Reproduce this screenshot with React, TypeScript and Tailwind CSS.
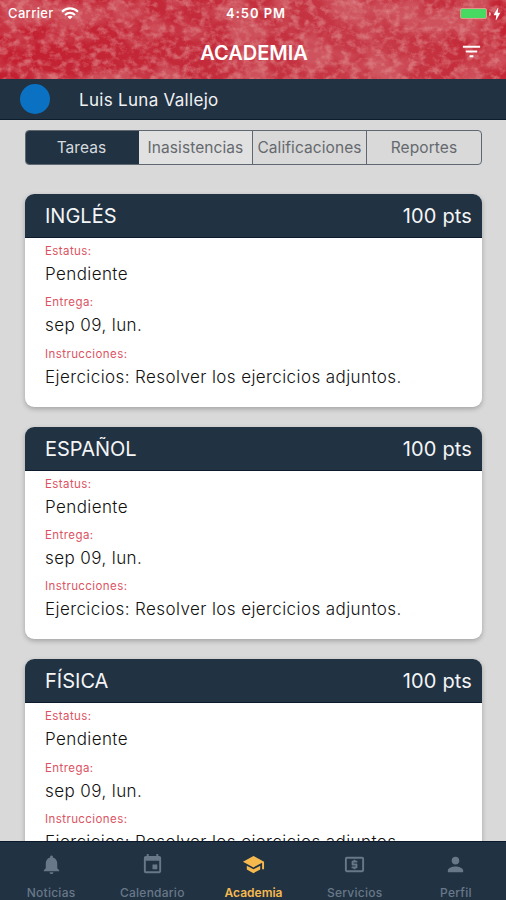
import React from "react";
import { MdNotifications, MdEvent, MdSchool, MdLocalAtm, MdPerson, MdFilterList, MdBolt } from "react-icons/md";

const tasks = ["INGLÉS", "ESPAÑOL", "FÍSICA"];

function Texture() {
  return (
    <svg className="absolute inset-0 h-full w-full" aria-hidden="true">
      <defs>
        <filter id="speckle" x="0" y="0" width="100%" height="100%" colorInterpolationFilters="sRGB">
          <feTurbulence type="fractalNoise" baseFrequency="0.12 0.15" numOctaves="5" seed="12" />
          <feColorMatrix values="0 0 0 0 0.88  0 0 0 0 0.56  0 0 0 0 0.57  2.8 0 0 0 -1.2" />
        </filter>
        <filter id="patches" x="0" y="0" width="100%" height="100%" colorInterpolationFilters="sRGB">
          <feTurbulence type="fractalNoise" baseFrequency="0.022 0.028" numOctaves="4" seed="5" />
          <feColorMatrix values="0 0 0 0 0.84  0 0 0 0 0.43  0 0 0 0 0.46  4 0 0 0 -1.75" />
        </filter>
        <linearGradient id="redBase">
          <stop offset="0" stopColor="#c31f30" />
          <stop offset="0.5" stopColor="#c42e3d" />
          <stop offset="0.75" stopColor="#c73b48" />
          <stop offset="1" stopColor="#c32433" />
        </linearGradient>
      </defs>
      <rect width="100%" height="100%" fill="url(#redBase)" />
      <rect width="100%" height="100%" filter="url(#patches)" opacity="0.55" />
      <rect width="100%" height="100%" filter="url(#speckle)" opacity="0.6" />
    </svg>
  );
}

function WifiIcon() {
  return (
    <svg viewBox="0 0 18 13" className="h-[13px] w-[18px]" fill="none" stroke="white" strokeWidth="2.1">
      <path d="M1 4.7C5.5.2 12.500.2 17 4.700" />
      <path d="M4 7.900C6.800 5.200 11.200 5.200 14 7.900" />
      <path d="M9 12.300 6.300 9.700Q9 7.800 11.700 9.700Z" fill="white" stroke="none" />
    </svg>
  );
}

function Field({ label, value }: { label: string; value: string }) {
  return (
    <div className="mb-[8.400px] whitespace-nowrap">
      <div className="mb-[3px] h-4 text-[11.500px] leading-4 tracking-[0.420px] text-[#dc5362]">{label}</div>
      <div className="h-6 text-[17px] font-light leading-6 tracking-[0.410px] text-[#111]">{value}</div>
    </div>
  );
}

function Card({ title }: { title: string }) {
  return (
    <article className="mb-5 h-[212.700px] shrink-0 overflow-hidden rounded-[9px] bg-white shadow-[0_2px_5px_rgba(0,0,0,0.25)]">
      <header className="flex h-11 items-center justify-between border-b border-[#0c1c2e] bg-[#213243] pl-5 pr-[10px] pt-px text-[20px] text-[#f4f5f6]">
        <h2>{title}</h2>
        <span className="tracking-[0.150px]">100 pts</span>
      </header>
      <div className="pl-5 pt-[5px]">
        <Field label="Estatus:" value="Pendiente" />
        <Field label="Entrega:" value="sep 09, lun." />
        <Field label="Instrucciones:" value="Ejercicios: Resolver los ejercicios adjuntos." />
      </div>
    </article>
  );
}

const nav = [
  { label: "Noticias", Icon: MdNotifications },
  { label: "Calendario", Icon: MdEvent },
  { label: "Academia", Icon: MdSchool },
  { label: "Servicios", Icon: MdLocalAtm },
  { label: "Perfil", Icon: MdPerson },
];

export default function App() {
  return (
    <div className="flex h-[900px] w-[506px] flex-col overflow-hidden bg-[#d9d9d9] font-['Inter',sans-serif]">
      <header className="relative h-[79px] shrink-0 text-white">
        <Texture />
        <div className="relative grid h-[27px] grid-cols-3 items-center px-2 text-[13px]">
          <div className="flex items-center gap-[7px]"><span className="font-medium tracking-[0.350px]">Carrier</span><WifiIcon /></div>
          <span className="pl-[6px] text-center font-semibold tracking-[0.950px]">4:50 PM</span>
          <div className="-mr-2 flex items-center justify-end">
            <span className="h-[11px] w-[27px] rounded-[2px] border border-[#e09a8b] bg-[#46da63]" />
            <span className="ml-[2px] h-1 w-[2px] rounded-r bg-[#e8a3a8]" />
            <MdBolt className="-ml-[2px] mr-px h-[16px] w-[16px]" />
          </div>
        </div>
        <div className="relative grid h-[52px] grid-cols-[1fr_auto_1fr] items-center pr-[23px]">
          <h1 className="col-start-2 -mt-px pl-[25px] text-[20px] font-semibold">ACADEMIA</h1>
          <MdFilterList className="-mt-[3px] h-[23px] w-[23px] justify-self-end" />
        </div>
      </header>
      <div className="flex h-[41px] shrink-0 items-center border-b border-[#0c1c2e] bg-[#213243] pl-5 text-[17px] text-[#f0f1f2]">
        <span className="mr-[29px] h-[30px] w-[30px] rounded-full bg-[#0b72c3]" />
        <span className="pt-[3px] tracking-[0.300px]">Luis Luna Vallejo</span>
      </div>
      <main className="flex min-h-0 flex-1 flex-col overflow-hidden px-6 pl-[25px] pt-[10px]">
        <div className="mb-[29px] grid h-[35px] shrink-0 grid-cols-[113px_114px_114px_1fr] overflow-hidden rounded-[4px] border border-[#5f6871] text-[15.500px] tracking-[0.080px] text-[#65696e]">
          <span className="flex items-center justify-center bg-[#213243] pr-[2px] pt-px text-[#d7dadd]">Tareas</span>
          <span className="flex items-center justify-center border-r border-[#5f6871] bg-[#e1e1e1] pt-px">Inasistencias</span>
          <span className="flex items-center justify-center border-r border-[#5f6871] pt-px">Calificaciones</span>
          <span className="flex items-center justify-center pt-px">Reportes</span>
        </div>
        {tasks.map((title) => <Card key={title} title={title} />)}
      </main>
      <nav className="grid h-[59px] shrink-0 grid-cols-5 border-t border-[#0b1829] bg-[#213243] text-[#697888]">
        {nav.map(({ label, Icon }) => (
          <div key={label} className={label === "Academia" ? "flex flex-col items-center pt-[11px] pl-px text-[#f6b94e]" : "flex flex-col items-center pt-[11px] pl-px"}>
            <Icon className="h-[23px] w-[23px]" />
            <span className={label === "Academia" ? "mt-[9px] text-[12px] font-semibold leading-4" : "mt-[9px] text-[12px] font-medium leading-4 tracking-[0.250px]"}>{label}</span>
          </div>
        ))}
      </nav>
    </div>
  );
}
